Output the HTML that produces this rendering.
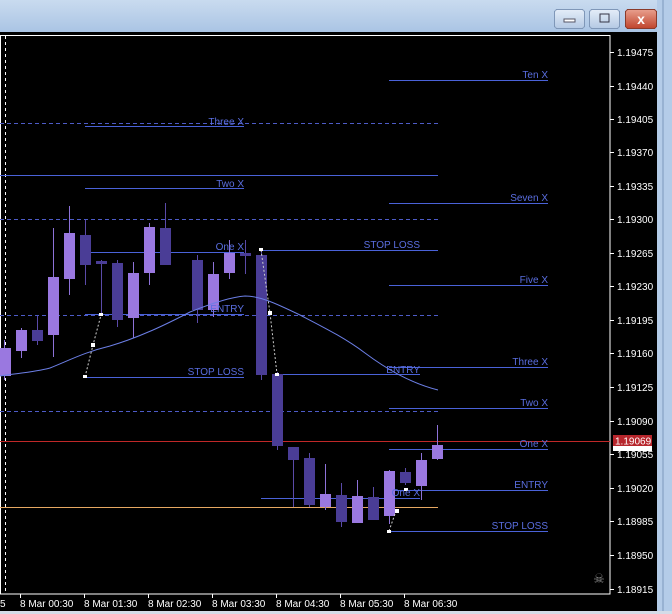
<!DOCTYPE html>
<html><head><meta charset="utf-8"><style>
html,body{margin:0;padding:0;width:672px;height:614px;overflow:hidden;background:#000}
svg{display:block}
text{font-family:"Liberation Sans",sans-serif}
line,rect{shape-rendering:crispEdges}
</style></head><body>
<svg width="672" height="614" viewBox="0 0 672 614" xmlns="http://www.w3.org/2000/svg">
<defs>
<linearGradient id="tb" x1="0" y1="0" x2="0" y2="1"><stop offset="0" stop-color="#c9dbef"/><stop offset="1" stop-color="#a7c2e3"/></linearGradient>
<linearGradient id="btn" x1="0" y1="0" x2="0" y2="1"><stop offset="0" stop-color="#e4edf8"/><stop offset="1" stop-color="#b4c9e4"/></linearGradient>
<linearGradient id="cls" x1="0" y1="0" x2="0" y2="1"><stop offset="0" stop-color="#e8a08e"/><stop offset="1" stop-color="#c0442c"/></linearGradient>
</defs>
<rect x="0" y="0" width="672" height="35" fill="url(#tb)"/>
<rect x="657" y="0" width="15" height="614" fill="#b4cce8"/>
<line x1="663" y1="0" x2="663" y2="614" stroke="#7d98bd"/>
<rect x="0" y="611" width="672" height="3" fill="#d4dce8"/>
<rect x="0" y="32" width="657" height="579" fill="#000"/>
<rect x="554.5" y="9.5" width="30" height="19" rx="3" fill="url(#btn)" stroke="#7f97b8"/>
<rect x="564" y="19" width="11" height="3" fill="#fff" stroke="#556" stroke-width="0.6"/>
<rect x="589.5" y="9.5" width="30" height="19" rx="3" fill="url(#btn)" stroke="#7f97b8"/>
<rect x="600" y="14" width="9" height="8" fill="none" stroke="#334" stroke-width="1.2"/>
<rect x="625.5" y="9.5" width="31" height="19" rx="3" fill="url(#cls)" stroke="#8a3a2a"/>
<text x="641" y="24" font-size="14" font-weight="bold" fill="#fff" text-anchor="middle">x</text>
<rect x="0.5" y="35.5" width="609.5" height="558.5" fill="none" stroke="#fff"/>
<line x1="5.5" y1="36" x2="5.5" y2="594" stroke="#fff" stroke-dasharray="3,3"/>
<g stroke="#4d5bc7" stroke-dasharray="4,3">
<line x1="0" y1="123.5" x2="438" y2="123.5"/>
<line x1="0" y1="219.5" x2="438" y2="219.5"/>
<line x1="0" y1="315.5" x2="438" y2="315.5"/>
<line x1="0" y1="411.5" x2="438" y2="411.5"/>
</g>
<g stroke="#4a62d8">
<line x1="0" y1="175.5" x2="438" y2="175.5"/>
<line x1="389" y1="80.5" x2="548" y2="80.5"/>
<line x1="85" y1="126.5" x2="244" y2="126.5"/>
<line x1="85" y1="188.5" x2="244" y2="188.5"/>
<line x1="389" y1="203.5" x2="548" y2="203.5"/>
<line x1="85" y1="252.5" x2="244" y2="252.5"/>
<line x1="261" y1="250.5" x2="438" y2="250.5"/>
<line x1="389" y1="285.5" x2="548" y2="285.5"/>
<line x1="85" y1="314.5" x2="244" y2="314.5"/>
<line x1="85" y1="377.5" x2="244" y2="377.5"/>
<line x1="277" y1="374.5" x2="420" y2="374.5"/>
<line x1="389" y1="367.5" x2="548" y2="367.5"/>
<line x1="389" y1="408.5" x2="548" y2="408.5"/>
<line x1="389" y1="449.5" x2="548" y2="449.5"/>
<line x1="389" y1="490.5" x2="548" y2="490.5"/>
<line x1="261" y1="498.5" x2="420" y2="498.5"/>
<line x1="389" y1="531.5" x2="548" y2="531.5"/>
</g>
<rect x="0" y="441" width="610" height="1" fill="#c02828"/>
<rect x="0" y="507" width="438" height="1" fill="#e6a862"/>
<g>
<g stroke="#8d72d8"><line x1="4.5" y1="340" x2="4.5" y2="380"/><line x1="21.5" y1="328" x2="21.5" y2="358"/><line x1="53.5" y1="228" x2="53.5" y2="357"/><line x1="69.5" y1="206" x2="69.5" y2="295"/><line x1="133.5" y1="262" x2="133.5" y2="338"/><line x1="149.5" y1="223" x2="149.5" y2="285"/><line x1="213.5" y1="262" x2="213.5" y2="317"/><line x1="229.5" y1="240" x2="229.5" y2="279"/><line x1="325.5" y1="464" x2="325.5" y2="510"/><line x1="357.5" y1="480" x2="357.5" y2="523"/><line x1="389.5" y1="470" x2="389.5" y2="524"/><line x1="421.5" y1="453" x2="421.5" y2="500"/><line x1="437.5" y1="425" x2="437.5" y2="460"/></g>
<g fill="#9a78e0"><rect x="0" y="348" width="11" height="28"/><rect x="16" y="330" width="11" height="21"/><rect x="48" y="277" width="11" height="58"/><rect x="64" y="233" width="11" height="46"/><rect x="128" y="273" width="11" height="45"/><rect x="144" y="227" width="11" height="46"/><rect x="208" y="274" width="11" height="36"/><rect x="224" y="253" width="11" height="20"/><rect x="320" y="494" width="11" height="13"/><rect x="352" y="496" width="11" height="27"/><rect x="384" y="471" width="11" height="45"/><rect x="416" y="460" width="11" height="26"/><rect x="432" y="445" width="11" height="14"/></g>
<g stroke="#5a4aa8"><line x1="37.5" y1="316" x2="37.5" y2="345"/><line x1="85.5" y1="220" x2="85.5" y2="285"/><line x1="101.5" y1="260" x2="101.5" y2="315"/><line x1="117.5" y1="260" x2="117.5" y2="327"/><line x1="165.5" y1="203" x2="165.5" y2="265"/><line x1="197.5" y1="255" x2="197.5" y2="323"/><line x1="245.5" y1="240" x2="245.5" y2="274"/><line x1="261.5" y1="250" x2="261.5" y2="380"/><line x1="277.5" y1="372" x2="277.5" y2="450"/><line x1="293.5" y1="447" x2="293.5" y2="507"/><line x1="309.5" y1="453" x2="309.5" y2="507"/><line x1="341.5" y1="483" x2="341.5" y2="527"/><line x1="373.5" y1="487" x2="373.5" y2="520"/><line x1="405.5" y1="468" x2="405.5" y2="485"/></g>
<g fill="#4a3d96"><rect x="32" y="330" width="11" height="11"/><rect x="80" y="235" width="11" height="30"/><rect x="96" y="261" width="11" height="3"/><rect x="112" y="263" width="11" height="57"/><rect x="160" y="228" width="11" height="37"/><rect x="192" y="260" width="11" height="50"/><rect x="240" y="253" width="11" height="3"/><rect x="256" y="255" width="11" height="120"/><rect x="272" y="374" width="11" height="72"/><rect x="288" y="447" width="11" height="13"/><rect x="304" y="458" width="11" height="47"/><rect x="336" y="495" width="11" height="27"/><rect x="368" y="497" width="11" height="23"/><rect x="400" y="472" width="11" height="11"/></g>
</g>
<path d="M0,376 C20,373 35,372 50,368 C70,360 85,352 110,346 C140,337 165,325 190,312 C210,304 230,297 245,296 C260,296 275,303 300,315 C325,328 345,338 365,353 C385,368 410,383 438,390" fill="none" stroke="#6c7fe6"/>
<g stroke="#ccc" stroke-dasharray="2,2" fill="none"><path d="M85,377 L93,345 L101,315"/><path d="M261,250 L270,313 L277,374"/><path d="M389,531 L396,511"/></g>
<g fill="#fff"><rect x="83" y="375" width="4" height="3"/><rect x="91" y="343" width="4" height="4"/><rect x="99" y="313" width="4" height="3"/><rect x="259" y="248" width="4" height="3"/><rect x="268" y="311" width="4" height="4"/><rect x="275" y="373" width="4" height="3"/><rect x="387" y="530" width="4" height="3"/><rect x="395" y="509" width="4" height="4"/><rect x="404" y="488" width="4" height="3"/></g>
<g font-size="10" fill="#5a6ee0" text-anchor="end">
<text x="548" y="78">Ten X</text>
<text x="244" y="125">Three X</text>
<text x="244" y="187">Two X</text>
<text x="548" y="201">Seven X</text>
<text x="244" y="250">One X</text>
<text x="420" y="248">STOP LOSS</text>
<text x="548" y="283">Five X</text>
<text x="244" y="312">ENTRY</text>
<text x="548" y="365">Three X</text>
<text x="420" y="373">ENTRY</text>
<text x="244" y="375">STOP LOSS</text>
<text x="548" y="406">Two X</text>
<text x="548" y="447">One X</text>
<text x="548" y="488">ENTRY</text>
<text x="420" y="496">One X</text>
<text x="548" y="529">STOP LOSS</text>
</g>
<g font-size="10" fill="#fff">
<g stroke="#fff"><line x1="610" y1="52.5" x2="614" y2="52.5"/><line x1="610" y1="86.5" x2="614" y2="86.5"/><line x1="610" y1="119.5" x2="614" y2="119.5"/><line x1="610" y1="152.5" x2="614" y2="152.5"/><line x1="610" y1="186.5" x2="614" y2="186.5"/><line x1="610" y1="219.5" x2="614" y2="219.5"/><line x1="610" y1="253.5" x2="614" y2="253.5"/><line x1="610" y1="286.5" x2="614" y2="286.5"/><line x1="610" y1="320.5" x2="614" y2="320.5"/><line x1="610" y1="353.5" x2="614" y2="353.5"/><line x1="610" y1="387.5" x2="614" y2="387.5"/><line x1="610" y1="421.5" x2="614" y2="421.5"/><line x1="610" y1="454.5" x2="614" y2="454.5"/><line x1="610" y1="488.5" x2="614" y2="488.5"/><line x1="610" y1="521.5" x2="614" y2="521.5"/><line x1="610" y1="555.5" x2="614" y2="555.5"/><line x1="610" y1="589.5" x2="614" y2="589.5"/></g>
<text x="617" y="56">1.19475</text><text x="617" y="90">1.19440</text><text x="617" y="123">1.19405</text><text x="617" y="156">1.19370</text><text x="617" y="190">1.19335</text><text x="617" y="223">1.19300</text><text x="617" y="257">1.19265</text><text x="617" y="290">1.19230</text><text x="617" y="324">1.19195</text><text x="617" y="357">1.19160</text><text x="617" y="391">1.19125</text><text x="617" y="425">1.19090</text><rect x="613" y="446" width="39" height="5" fill="#fff"/><text x="617" y="458">1.19055</text><text x="617" y="492">1.19020</text><text x="617" y="525">1.18985</text><text x="617" y="559">1.18950</text><text x="617" y="593">1.18915</text>
<rect x="613" y="435" width="39" height="11" fill="#b7262c"/><text x="615" y="444.5" fill="#fff">1.19069</text>
</g>
<text x="599" y="583" font-size="13" fill="#888" text-anchor="middle">☠</text>
<g font-size="10" fill="#fff">
<g stroke="#fff"><line x1="20.5" y1="594" x2="20.5" y2="598"/><line x1="84.5" y1="594" x2="84.5" y2="598"/><line x1="148.5" y1="594" x2="148.5" y2="598"/><line x1="212.5" y1="594" x2="212.5" y2="598"/><line x1="276.5" y1="594" x2="276.5" y2="598"/><line x1="340.5" y1="594" x2="340.5" y2="598"/><line x1="404.5" y1="594" x2="404.5" y2="598"/></g>
<text x="0" y="607">5</text><text x="20" y="607">8 Mar 00:30</text><text x="84" y="607">8 Mar 01:30</text><text x="148" y="607">8 Mar 02:30</text><text x="212" y="607">8 Mar 03:30</text><text x="276" y="607">8 Mar 04:30</text><text x="340" y="607">8 Mar 05:30</text><text x="404" y="607">8 Mar 06:30</text>
</g>
</svg>
</body></html>
